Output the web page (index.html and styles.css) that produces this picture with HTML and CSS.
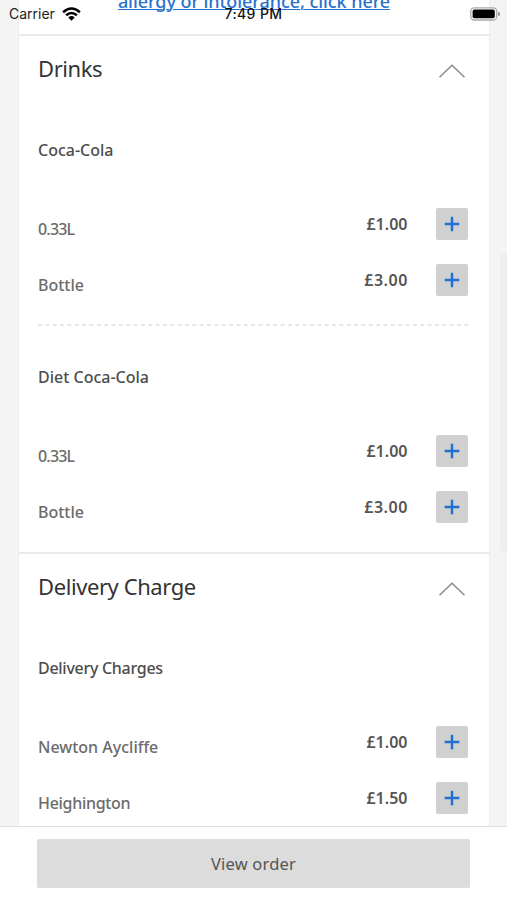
FILE: index.html
```html
<!DOCTYPE html>
<html lang="en">
<head>
<meta charset="utf-8">
<title>Menu</title>
<link rel="stylesheet" href="styles.css">
</head>
<body>
<div class="screen">
  <header class="status">
    <div class="carrier"><span>Carrier</span>
      <svg width="19" height="14" viewBox="0 0 19 14" fill="none" stroke="#000" stroke-width="2.5"><path d="M1.1 5.2Q9.5 -2.1 17.9 5.2M4.1 8.3Q9.5 3.7 14.9 8.3"/><path d="M6.3 10.4Q9.5 7.8 12.7 10.4L9.5 13.7Z" fill="#000" stroke="none"/></svg>
    </div>
    <span class="clock">7:49 PM</span>
    <svg class="battery" width="31" height="14" viewBox="0 0 31 14"><rect x=".8" y=".8" width="25.8" height="12.2" rx="3.5" fill="#fff" stroke="#aaa" stroke-width="1.3"/><rect x="2.6" y="2.6" width="22.2" height="8.6" rx="1.8" fill="#000"/><path d="M28 4.7Q30.2 5.2 30.2 7T28 9.3Z" fill="#999"/></svg>
  </header>
  <main class="menu">
    <div class="notice"><a class="notice-link">allergy or intolerance, click here</a></div>
    <section class="category">
      <div class="category-head"><h2>Drinks</h2><svg class="chevron" width="28" height="16" viewBox="0 0 28 16"><path d="M1.5 14.2L14 2.2L26.5 14.2"/></svg></div>
      <article class="item">
        <h3>Coca-Cola</h3>
        <div class="option"><span class="label size">0.33L</span><span class="price">£1.00</span><button class="add"><svg width="16" height="16" viewBox="0 0 16 16"><path d="M8 .7V15.3M.7 8H15.3"/></svg></button></div>
        <div class="option"><span class="label">Bottle</span><span class="price wide">£3.00</span><button class="add"><svg width="16" height="16" viewBox="0 0 16 16"><path d="M8 .7V15.3M.7 8H15.3"/></svg></button></div>
        <svg class="divider" width="432" height="2"><path d="M0 1H432"/></svg>
      </article>
      <article class="item">
        <h3>Diet Coca-Cola</h3>
        <div class="option"><span class="label size">0.33L</span><span class="price">£1.00</span><button class="add"><svg width="16" height="16" viewBox="0 0 16 16"><path d="M8 .7V15.3M.7 8H15.3"/></svg></button></div>
        <div class="option"><span class="label">Bottle</span><span class="price wide">£3.00</span><button class="add"><svg width="16" height="16" viewBox="0 0 16 16"><path d="M8 .7V15.3M.7 8H15.3"/></svg></button></div>
      </article>
    </section>
    <section class="category">
      <div class="category-head"><h2>Delivery Charge</h2><svg class="chevron" width="28" height="16" viewBox="0 0 28 16"><path d="M1.5 14.2L14 2.2L26.5 14.2"/></svg></div>
      <article class="item">
        <h3 class="charges">Delivery Charges</h3>
        <div class="option"><span class="label">Newton Aycliffe</span><span class="price">£1.00</span><button class="add"><svg width="16" height="16" viewBox="0 0 16 16"><path d="M8 .7V15.3M.7 8H15.3"/></svg></button></div>
        <div class="option"><span class="label heigh">Heighington</span><span class="price">£1.50</span><button class="add"><svg width="16" height="16" viewBox="0 0 16 16"><path d="M8 .7V15.3M.7 8H15.3"/></svg></button></div>
      </article>
    </section>
  </main>
  <div class="scrollbar"></div>
  <footer class="footer"><button class="view-order">View order</button></footer>
</div>
</body>
</html>
```
FILE: styles.css
```css
* { box-sizing: border-box; }
body { margin: 0; background: #f4f4f4; font-family: "Noto Sans", sans-serif; color: #555; }
button { border: 0; padding: 0; font: inherit; }
h2, h3 { margin: 0; }
.screen { position: relative; height: 900px; overflow: hidden; display: flex; flex-direction: column; }
.status { position: absolute; top: 0; left: 0; right: 0; height: 27px; z-index: 2; display: grid; grid-template-columns: 1fr auto 1fr; align-items: center; padding: 0 6px 0 9px; font-family: Inter, sans-serif; color: #222; font-size: 14px; }
.carrier { display: flex; align-items: center; gap: 7px; }
.clock { font-weight: 500; color: #111; font-size: 14px; letter-spacing: .4px; margin-left: -3px; }
.battery { justify-self: end; }
.menu { flex: 1; min-height: 0; overflow: hidden; margin: 0 17px 0 18px; background: #fff; border: solid #eee; border-width: 0 1px; }
.notice { display: flex; justify-content: center; height: 34px; }
.notice-link { margin-top: -12px; color: #2a73cc; font-size: 18px; line-height: 26px; letter-spacing: -.07px; font-weight: 500; text-decoration: underline; text-underline-offset: 1px; text-decoration-thickness: 1px; text-decoration-skip-ink: auto; white-space: nowrap; }
.category { border-top: 2px solid #e9e9e9; height: 518px; }
.category-head { height: 62px; padding: 3px 23px 0 19px; display: flex; justify-content: space-between; align-items: center; }
h2 { font-size: 22px; font-weight: 400; color: #333; line-height: 30px; letter-spacing: -.42px; padding-bottom: 2px; }
.chevron { fill: none; stroke: #888; stroke-width: 1.5; margin-top: 5px; }
.item { position: relative; height: 227px; padding: 0 21.5px 0 19px; }
h3 { height: 97.5px; padding-top: 40px; font-size: 16px; line-height: 24px; font-weight: 500; color: #4d4d4d; }
.charges { letter-spacing: -.28px; }
.option { height: 56px; display: flex; align-items: center; }
.label { flex: 1; font-size: 16px; line-height: 24px; padding-top: 10px; font-weight: 500; color: #6b6b6b; }
.size { letter-spacing: -.8px; }
.heigh { letter-spacing: -.3px; }
.price { font-size: 16px; font-weight: 600; color: #555; margin-right: 28px; }
.wide { letter-spacing: .55px; margin-right: 27.5px; }
.add { width: 32px; height: 32px; border-radius: 2px; background: #d0d0d0; display: grid; place-items: center; }
.add path { stroke: #1f70d0; stroke-width: 2.4; fill: none; }
.divider { position: absolute; left: 19px; top: 226px; }
.divider path { stroke: #ddd; stroke-width: 1.3; stroke-dasharray: 4 3.35; }
.scrollbar { position: absolute; right: 0; top: 254px; width: 7px; height: 298px; background: #eee; border-radius: 3px 0 0 3px; }
.footer { height: 74px; border-top: 1px solid #e0e0e0; background: #fff; padding: 12px 37px; }
.view-order { display: block; width: 433px; height: 49px; background: #dcdcdc; color: #555; border-radius: 2px; font-size: 16.5px; font-weight: 400; letter-spacing: .2px; }
```
